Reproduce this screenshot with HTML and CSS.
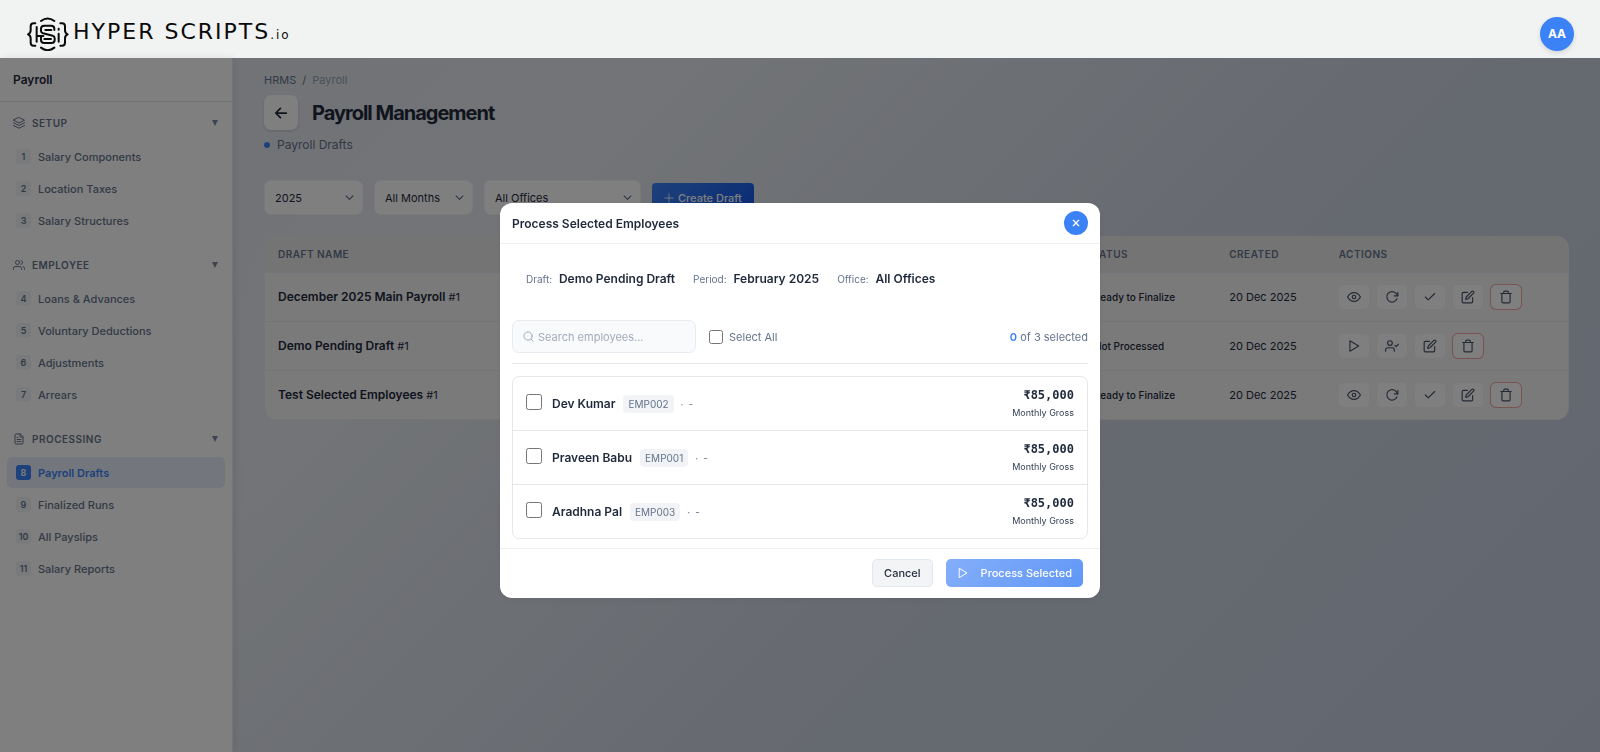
FILE: index.html
```html
<!DOCTYPE html>
<html lang="en">
<head>
  <meta charset="UTF-8">
  <meta name="viewport" content="width=device-width, initial-scale=1.0">
  <title>Payroll Management</title>
  <link rel="stylesheet" href="styles.css">
</head>
<body>
  <!-- icons used more than once -->
  <svg class="sprite" aria-hidden="true">
    <symbol id="i-eye" viewBox="0 0 24 24"><path d="M1 12s4-7.500 11-7.500S23 12 23 12s-4 7.500-11 7.500S1 12 1 12z"/><circle cx="12" cy="12" r="3"/></symbol>
    <symbol id="i-refresh" viewBox="0 0 24 24"><path d="M22 4v6h-6"/><path d="M20.500 15a9 9 0 1 1-2-9.500L22 10"/></symbol>
    <symbol id="i-check" viewBox="0 0 24 24"><path d="M20 6L9 17l-5-5"/></symbol>
    <symbol id="i-edit" viewBox="0 0 24 24"><path d="M11 4H4a2 2 0 0 0-2 2v14a2 2 0 0 0 2 2h14a2 2 0 0 0 2-2v-7"/><path d="M18.500 2.500a2.100 2.100 0 0 1 3 3L12 15l-4 1 1-4z"/></symbol>
    <symbol id="i-trash" viewBox="0 0 24 24"><path d="M3 6h18M19 6v14a2 2 0 0 1-2 2H7a2 2 0 0 1-2-2V6M8 6V4a2 2 0 0 1 2-2h4a2 2 0 0 1 2 2v2"/></symbol>
    <symbol id="i-play" viewBox="0 0 24 24"><path d="M5 3l15 9-15 9z"/></symbol>
    <symbol id="i-usercheck" viewBox="0 0 24 24"><path d="M16 21v-2a4 4 0 0 0-4-4H5a4 4 0 0 0-4 4v2"/><circle cx="8.500" cy="7" r="4"/><path d="M17 11l2 2 4-4"/></symbol>
    <symbol id="i-down" viewBox="0 0 24 24"><path d="M3 8l9 9 9-9"/></symbol>
  </svg>

  <header class="topbar">
    <a class="logo" href="#">
      <svg class="logo-mark" viewBox="81 51 126 102" aria-hidden="true">
        <path d="M106 70h-5q-9 0-9 9v12q0 9-8 12q8 3 8 12v13q0 9 9 9h5"/>
        <path d="M181 70h5q9 0 9 9v12q0 9 8 12q-8 3-8 12v13q0 9-9 9h-5"/>
        <path d="M123 63q20-15 40 0M123 143q20 15 40 0"/>
        <path d="M163 90v-4q0-9-10-9h-20q-10 0-10 9v7q0 5 6 7l29 7q6 2 6 8v5q0 9-10 9h-21q-10 0-10-9v-9"/>
        <path d="M110 81v44M110 108h20M154 90h-18M133 117h20M176 101v24M176 86v3"/>
      </svg>
      <span class="logo-text">HYPER SCRIPTS<small>.io</small></span>
    </a>
    <button class="avatar" type="button">AA</button>
  </header>

  <div class="layout">
    <aside class="sidebar">
      <div class="sidebar-title">Payroll</div>
      <nav>
        <section class="group">
          <button class="group-head" type="button">
            <svg class="icon" viewBox="0 0 24 24"><path d="M12 1l11 5.500L12 12 1 6.500zM1 11.500L12 17l11-5.500M1 17l11 5.500L23 17"/></svg>
            <span>SETUP</span><i class="caret"></i>
          </button>
          <ul>
            <li><a href="#"><b>1</b>Salary Components</a></li>
            <li><a href="#"><b>2</b>Location Taxes</a></li>
            <li><a href="#"><b>3</b>Salary Structures</a></li>
          </ul>
        </section>
        <section class="group">
          <button class="group-head" type="button">
            <svg class="icon" viewBox="0 0 24 24"><path d="M17 21v-2a4 4 0 0 0-4-4H5a4 4 0 0 0-4 4v2"/><circle cx="9" cy="7" r="4"/><path d="M23 21v-2a4 4 0 0 0-3-3.900M16 3.100a4 4 0 0 1 0 7.800"/></svg>
            <span>EMPLOYEE</span><i class="caret"></i>
          </button>
          <ul>
            <li><a href="#"><b>4</b>Loans &amp; Advances</a></li>
            <li><a href="#"><b>5</b>Voluntary Deductions</a></li>
            <li><a href="#"><b>6</b>Adjustments</a></li>
            <li><a href="#"><b>7</b>Arrears</a></li>
          </ul>
        </section>
        <section class="group">
          <button class="group-head" type="button">
            <svg class="icon" viewBox="0 0 24 24"><path d="M14 2H6a2 2 0 0 0-2 2v16a2 2 0 0 0 2 2h12a2 2 0 0 0 2-2V8zM14 2v6h6M16 13H8M16 17H8M10 9H8"/></svg>
            <span>PROCESSING</span><i class="caret"></i>
          </button>
          <ul>
            <li><a class="active" href="#"><b>8</b>Payroll Drafts</a></li>
            <li><a href="#"><b>9</b>Finalized Runs</a></li>
            <li><a href="#"><b>10</b>All Payslips</a></li>
            <li><a href="#"><b>11</b>Salary Reports</a></li>
          </ul>
        </section>
      </nav>
    </aside>

    <main class="main">
      <div class="breadcrumb"><a href="#">HRMS</a><span>/</span><span class="current">Payroll</span></div>
      <div class="heading">
        <button class="back" type="button" aria-label="Back">
          <svg class="icon" viewBox="0 0 24 24"><path d="M21 12H4M11 4l-8 8 8 8"/></svg>
        </button>
        <h1>Payroll Management</h1>
      </div>
      <p class="subtitle">Payroll Drafts</p>

      <div class="filters">
        <div class="select"><select aria-label="Year"><option>2025</option></select><svg class="icon"><use href="#i-down"/></svg></div>
        <div class="select"><select aria-label="Month"><option>All Months</option></select><svg class="icon"><use href="#i-down"/></svg></div>
        <div class="select wide"><select aria-label="Office"><option>All Offices</option></select><svg class="icon"><use href="#i-down"/></svg></div>
        <button class="create" type="button"><svg class="icon" viewBox="0 0 24 24"><path d="M12 2v20M2 12h20"/></svg>Create Draft</button>
      </div>

      <div class="table-card">
        <table>
          <thead>
            <tr><th class="col-name">Draft Name</th><th>Period</th><th>Office</th><th class="col-status">Status</th><th class="col-created">Created</th><th class="col-actions">Actions</th></tr>
          </thead>
          <tbody>
            <tr>
              <td><strong>December 2025 Main Payroll</strong> #1</td><td></td><td></td>
              <td><span class="status">Ready to Finalize</span></td><td>20 Dec 2025</td>
              <td><div class="actions">
                <button type="button" aria-label="View"><svg class="icon"><use href="#i-eye"/></svg></button>
                <button type="button" aria-label="Reprocess"><svg class="icon"><use href="#i-refresh"/></svg></button>
                <button type="button" aria-label="Finalize"><svg class="icon"><use href="#i-check"/></svg></button>
                <button type="button" aria-label="Edit"><svg class="icon"><use href="#i-edit"/></svg></button>
                <button type="button" aria-label="Delete" class="danger"><svg class="icon"><use href="#i-trash"/></svg></button>
              </div></td>
            </tr>
            <tr>
              <td><strong>Demo Pending Draft</strong> #1</td><td></td><td></td>
              <td><span class="status">Not Processed</span></td><td>20 Dec 2025</td>
              <td><div class="actions">
                <button type="button" aria-label="Process"><svg class="icon"><use href="#i-play"/></svg></button>
                <button type="button" aria-label="Process selected"><svg class="icon"><use href="#i-usercheck"/></svg></button>
                <button type="button" aria-label="Edit"><svg class="icon"><use href="#i-edit"/></svg></button>
                <button type="button" aria-label="Delete" class="danger"><svg class="icon"><use href="#i-trash"/></svg></button>
              </div></td>
            </tr>
            <tr>
              <td><strong>Test Selected Employees</strong> #1</td><td></td><td></td>
              <td><span class="status">Ready to Finalize</span></td><td>20 Dec 2025</td>
              <td><div class="actions">
                <button type="button" aria-label="View"><svg class="icon"><use href="#i-eye"/></svg></button>
                <button type="button" aria-label="Reprocess"><svg class="icon"><use href="#i-refresh"/></svg></button>
                <button type="button" aria-label="Finalize"><svg class="icon"><use href="#i-check"/></svg></button>
                <button type="button" aria-label="Edit"><svg class="icon"><use href="#i-edit"/></svg></button>
                <button type="button" aria-label="Delete" class="danger"><svg class="icon"><use href="#i-trash"/></svg></button>
              </div></td>
            </tr>
          </tbody>
        </table>
      </div>
    </main>
  </div>

  <!-- process employees dialog -->
  <div class="overlay">
    <div class="modal" role="dialog" aria-labelledby="modal-title">
      <div class="modal-head">
        <h2 id="modal-title">Process Selected Employees</h2>
        <button class="close" type="button" aria-label="Close"><svg class="icon" viewBox="0 0 24 24"><path d="M4 4l16 16M20 4L4 20"/></svg></button>
      </div>
      <div class="modal-body">
        <div class="info">
          <div>Draft: <strong>Demo Pending Draft</strong></div>
          <div>Period: <strong>February 2025</strong></div>
          <div>Office: <strong>All Offices</strong></div>
        </div>
        <div class="toolbar">
          <label class="search">
            <svg class="icon" viewBox="0 0 24 24"><circle cx="11" cy="11" r="9"/><path d="M18 18l4 4"/></svg>
            <input type="text" placeholder="Search employees..." aria-label="Search employees">
          </label>
          <label class="select-all"><input type="checkbox">Select All</label>
          <div class="count"><b>0</b> of 3 selected</div>
        </div>
        <div class="employees">
          <label class="employee">
            <input type="checkbox">
            <span class="name">Dev Kumar</span><span class="code">EMP002</span><span class="dept">·</span><span class="dept">-</span>
            <span class="pay"><b>₹85,000</b><small>Monthly Gross</small></span>
          </label>
          <label class="employee">
            <input type="checkbox">
            <span class="name">Praveen Babu</span><span class="code">EMP001</span><span class="dept">·</span><span class="dept">-</span>
            <span class="pay"><b>₹85,000</b><small>Monthly Gross</small></span>
          </label>
          <label class="employee">
            <input type="checkbox">
            <span class="name">Aradhna Pal</span><span class="code">EMP003</span><span class="dept">·</span><span class="dept">-</span>
            <span class="pay"><b>₹85,000</b><small>Monthly Gross</small></span>
          </label>
        </div>
      </div>
      <div class="modal-foot">
        <button class="cancel" type="button">Cancel</button>
        <button class="process" type="button"><svg class="icon"><use href="#i-play"/></svg>Process Selected</button>
      </div>
    </div>
  </div>
</body>
</html>
```

FILE: styles.css
```css
* {
  box-sizing: border-box;
}
body {
  margin: 0;
  min-height: 100vh;
  display: flex;
  flex-direction: column;
  font-family: Inter, "Liberation Sans", sans-serif;
  font-size: 12px;
  color: #1e293b;
}
button, input, select {
  font-family: inherit;
  font-size: inherit;
  color: inherit;
}
button {
  padding: 0;
  border: 0;
  background: none;
}
a {
  color: inherit;
  text-decoration: none;
}
h1, h2, p, ul {
  margin: 0;
  padding: 0;
}
.sprite {
  display: none;
}
.icon {
  width: 14px;
  height: 14px;
  flex: none;
  fill: none;
  stroke: currentColor;
  stroke-width: 2;
  stroke-linecap: round;
  stroke-linejoin: round;
}

/* top bar */
.topbar {
  height: 58px;
  padding: 9px 26px 0 27px;
  display: flex;
  align-items: center;
  justify-content: space-between;
  background: #f1f2f2;
}
.logo {
  display: flex;
  align-items: center;
  gap: 4px;
  color: #0a0a0a;
}
.logo-mark {
  width: 42px;
  height: 34px;
  fill: none;
  stroke: currentColor;
  stroke-width: 6;
  stroke-linecap: round;
  stroke-linejoin: round;
}
.logo-text {
  font-family: "DejaVu Sans", sans-serif;
  font-size: 22px;
  line-height: 26px;
  letter-spacing: 2px;
}
.logo-text small {
  font-size: 12px;
}
.avatar {
  width: 34px;
  height: 34px;
  border-radius: 50%;
  background: #3b82f6;
  color: #fff;
  font-size: 12px;
  font-weight: 700;
  box-shadow: 0 2px 5px rgba(0, 0, 0, .12);
}

.layout {
  flex: 1;
  display: flex;
  background: linear-gradient(135deg, #e3e6ee 0%, #e4e8ee 30%, #cfd6e2 60%, #c3cddf 100%);
}

/* sidebar */
.sidebar {
  width: 233px;
  flex: none;
  background: #fff;
  border-right: 1px solid #e2e8f0;
  box-shadow: 2px 0 8px rgba(0, 0, 0, .08);
}
.sidebar-title {
  height: 44px;
  padding: 0 13px;
  display: flex;
  align-items: center;
  border-bottom: 1px solid #e2e8f0;
  font-weight: 600;
}
.group {
  padding-top: 15px;
}
.group:first-child {
  padding-top: 7px;
}
.group-head {
  width: 100%;
  height: 27px;
  padding: 0 14px 0 13px;
  display: flex;
  align-items: center;
  gap: 7px;
  color: #64748b;
  font-size: 10px;
  font-weight: 600;
  letter-spacing: .05em;
}
.group-head .icon {
  width: 12px;
  height: 12px;
}
.caret {
  margin-left: auto;
  border: 3px solid transparent;
  border-top: 6px solid #7c899d;
  border-bottom: 0;
}
.group ul {
  padding: 5px 7px 0;
  display: grid;
  gap: 1px;
  list-style: none;
}
.group a {
  height: 31px;
  padding: 0 9px;
  display: flex;
  align-items: center;
  gap: 7px;
  border-radius: 5px;
  color: #64748b;
  font-size: 11px;
  font-weight: 500;
}
.group b {
  width: 15px;
  height: 15px;
  border-radius: 3px;
  background: #f1f5f9;
  font-size: 9px;
  font-weight: 600;
  line-height: 15px;
  text-align: center;
}
.group a.active {
  background: #e6edfa;
  color: #3b82f6;
  font-weight: 600;
}
.group a.active b {
  background: #3b82f6;
  color: #fff;
}

/* page */
.main {
  flex: 1;
  min-width: 0;
  padding: 14px 31px;
}
.breadcrumb {
  display: flex;
  gap: 6px;
  color: #64748b;
  font-size: 11px;
  line-height: 16px;
}
.breadcrumb .current {
  color: #94a3b8;
}
.heading {
  margin-top: 7px;
  display: flex;
  align-items: center;
  gap: 14px;
}
.back {
  width: 34px;
  height: 35px;
  display: grid;
  place-items: center;
  border-radius: 7px;
  background: #fff;
  box-shadow: 0 1px 3px rgba(0, 0, 0, .15);
}
.back .icon {
  stroke-width: 3;
}
h1 {
  font-size: 20px;
  font-weight: 700;
  letter-spacing: -1px;
  color: #1e293b;
}
.subtitle {
  margin-top: 7px;
  display: flex;
  align-items: center;
  gap: 7px;
  color: #64748b;
  line-height: 16px;
}
.subtitle::before {
  content: "";
  width: 6px;
  height: 6px;
  border-radius: 50%;
  background: #3b82f6;
}
.filters {
  margin-top: 27px;
  display: flex;
  align-items: center;
  gap: 11px;
}
.select {
  width: 99px;
  display: grid;
  align-items: center;
}
.select.wide {
  width: 157px;
}
.select select,
.select .icon {
  grid-area: 1 / 1;
}
.select select {
  height: 35px;
  padding: 0 10px;
  appearance: none;
  border: 1px solid #f1f5f9;
  border-radius: 7px;
  background: #fff;
  font-size: 11px;
}
.select .icon {
  width: 9px;
  height: 9px;
  margin-right: 9px;
  justify-self: end;
  pointer-events: none;
  color: #64748b;
  stroke-width: 3;
}
.create {
  height: 29px;
  padding: 0 12px;
  display: flex;
  align-items: center;
  gap: 4px;
  border-radius: 4px;
  background: linear-gradient(135deg, #3b82f6, #1558e8);
  color: #fff;
  font-size: 11px;
  font-weight: 500;
}
.create .icon {
  width: 10px;
  height: 10px;
}

.table-card {
  margin-top: 21px;
  overflow: hidden;
  border: 1px solid #e8ebef;
  border-radius: 12px;
  background: #f4f5f7;
}
table {
  width: 100%;
  table-layout: fixed;
  border-collapse: collapse;
}
th, td {
  padding: 0 13px;
  text-align: left;
}
th {
  height: 35px;
  background: #eae9ea;
  border-bottom: 1px solid #e2e8f0;
  color: #64748b;
  font-size: 10px;
  font-weight: 600;
  letter-spacing: .05em;
  text-transform: uppercase;
}
td {
  height: 49px;
  font-size: 11px;
}
tr + tr td {
  border-top: 1px solid #e2e8f0;
}
td strong {
  font-size: 12px;
  font-weight: 600;
}
.col-name {
  width: 22%;
}
.col-status {
  width: 11%;
}
.col-created {
  width: 8.4%;
}
.col-actions {
  width: 18.6%;
}
.status {
  padding: 0 8px;
  font-size: 10px;
  font-weight: 500;
}
.actions {
  display: flex;
  gap: 8px;
}
.actions button {
  width: 30px;
  height: 24px;
  display: grid;
  place-items: center;
  border-radius: 5px;
  background: #fff;
  color: #475569;
}
.actions .danger {
  box-shadow: 0 0 0 1px #f3a5a5;
}

/* dialog */
.overlay {
  position: fixed;
  inset: 58px 0 0;
  padding-bottom: 9px;
  display: flex;
  align-items: center;
  justify-content: center;
  background: rgba(0, 0, 0, .5);
}
.modal {
  width: 600px;
  border-radius: 12px;
  background: #fff;
  box-shadow: 0 2px 8px rgba(0, 0, 0, .06);
}
.modal-head {
  height: 41px;
  padding: 0 12px;
  display: flex;
  align-items: center;
  justify-content: space-between;
  border-bottom: 1px solid #eef0f4;
}
h2 {
  font-size: 12px;
  font-weight: 600;
}
.close {
  width: 24px;
  height: 24px;
  display: grid;
  place-items: center;
  border-radius: 50%;
  background: #3b82f6;
  color: #fff;
}
.close .icon {
  width: 8px;
  height: 8px;
  stroke-width: 4;
}
.modal-body {
  padding: 12px 12px 9px;
}
.info {
  height: 44px;
  padding: 0 14px;
  display: flex;
  align-items: center;
  gap: 18px;
  color: #64748b;
  font-size: 10px;
}
.info strong {
  margin-left: 4px;
  color: #1e293b;
  font-size: 12px;
  font-weight: 600;
}
.toolbar {
  margin-top: 20px;
  padding-bottom: 10px;
  display: flex;
  align-items: center;
  gap: 13px;
  border-bottom: 1px solid #e5e7eb;
  color: #64748b;
  font-size: 11px;
}
.search {
  width: 184px;
  height: 33px;
  padding: 0 10px;
  display: flex;
  align-items: center;
  gap: 4px;
  border: 1px solid #e8ebf0;
  border-radius: 7px;
  background: #f8fafc;
  color: #94a3b8;
}
.search .icon {
  width: 11px;
  height: 11px;
}
.search input {
  width: 100%;
  min-width: 0;
  padding: 0;
  border: 0;
  outline: 0;
  background: none;
}
.search input::placeholder {
  color: #a3abb9;
}
.select-all {
  display: flex;
  align-items: center;
  gap: 6px;
}
.select-all input {
  width: 14px;
  height: 14px;
  margin: 0;
}
.count {
  margin-left: auto;
}
.count b {
  color: #3b82f6;
  font-weight: 600;
}
.employees {
  margin-top: 12px;
  border: 1px solid #e5e7eb;
  border-radius: 7px;
}
.employee {
  height: 53px;
  padding: 0 13px;
  display: flex;
  align-items: center;
}
.employee + .employee {
  height: 54px;
  border-top: 1px solid #e5e7eb;
}
.employee input {
  width: 16px;
  height: 16px;
  margin: 0 10px 4px 0;
}
.name {
  font-size: 12px;
  font-weight: 600;
}
.code {
  margin: 0 2px 0 8px;
  padding: 0 5px;
  border-radius: 4px;
  background: #f1f3f6;
  color: #64748b;
  font-size: 10px;
  line-height: 18px;
}
.dept {
  margin-left: 5px;
  color: #64748b;
  font-size: 10px;
}
.pay {
  margin-left: auto;
  display: grid;
  text-align: right;
}
.pay b {
  font-family: "DejaVu Sans Mono", monospace;
  font-size: 12px;
  line-height: 18px;
}
.pay small {
  font-size: 9px;
  line-height: 18px;
  color: #334155;
}
.modal-foot {
  height: 50px;
  padding: 0 17px 2px;
  display: flex;
  align-items: center;
  justify-content: flex-end;
  gap: 13px;
  border-top: 1px solid #eef0f4;
}
.modal-foot button {
  height: 28px;
  padding: 0 11px;
  border-radius: 5px;
  font-size: 11px;
  font-weight: 500;
}
.modal-foot .cancel {
  border: 1px solid #e2e8f0;
  background: #f3f4f6;
}
.modal-foot .process {
  display: flex;
  align-items: center;
  gap: 12px;
  background: linear-gradient(135deg, #84aefa, #6097f6);
  color: #fff;
}
.modal-foot .icon {
  width: 12px;
  height: 12px;
}
```
